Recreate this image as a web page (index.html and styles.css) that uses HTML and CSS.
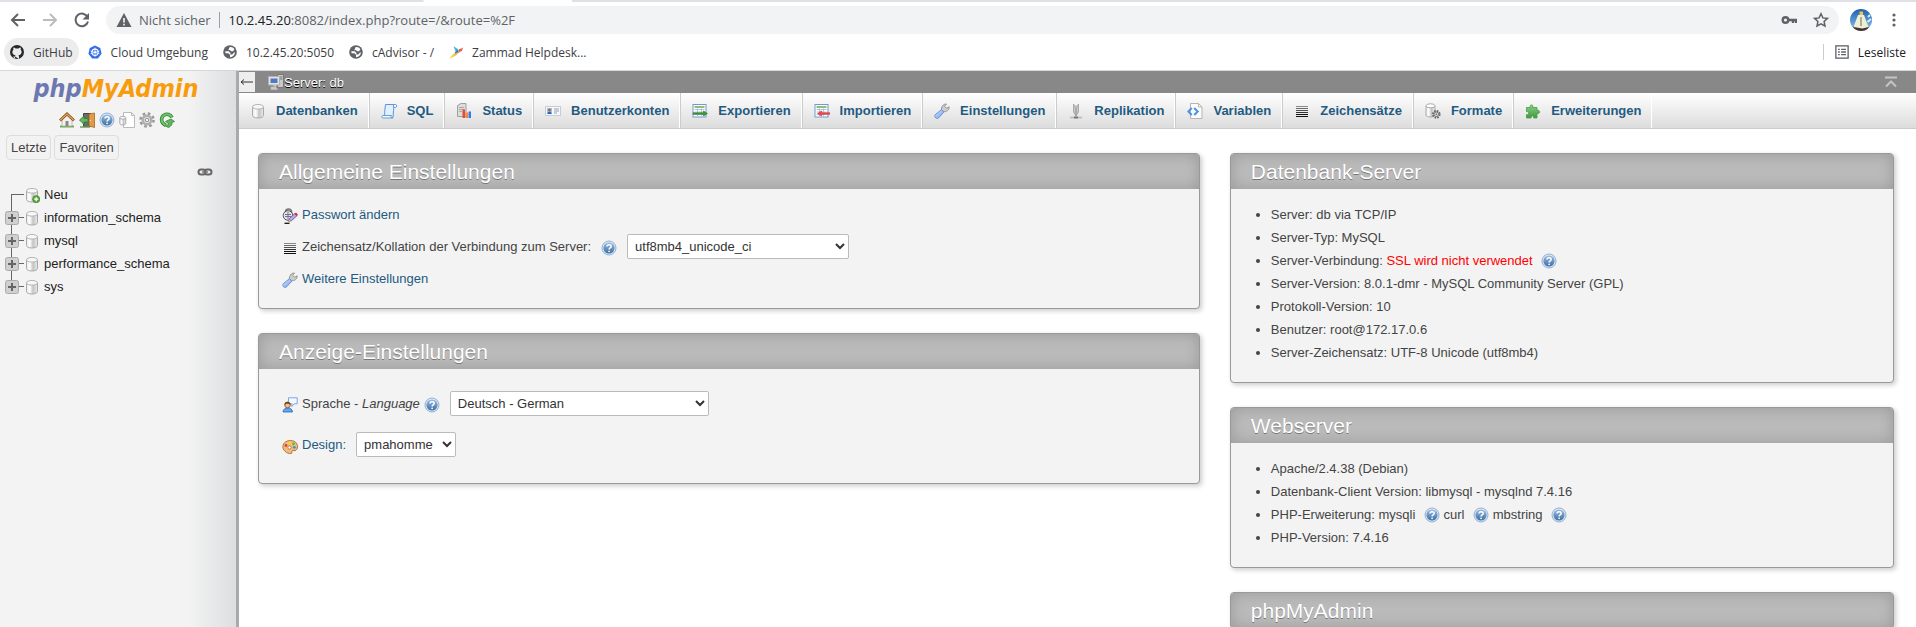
FILE: index.html
```html
<!DOCTYPE html>
<html lang="de">
<head>
<meta charset="utf-8">
<title>phpMyAdmin</title>
<link rel="stylesheet" href="styles.css">
</head>
<body>
<svg class="defs" aria-hidden="true">
  <defs>
    <linearGradient id="g-cyl" x1="0" x2="1" y1="0" y2="0"><stop offset="0" stop-color="#e8e8e8"/><stop offset=".3" stop-color="#fff"/><stop offset=".6" stop-color="#c4c4c4"/><stop offset="1" stop-color="#ececec"/></linearGradient>
    <linearGradient id="g-help" x1="0" x2="0" y1="0" y2="1"><stop offset="0" stop-color="#9dbde2"/><stop offset="1" stop-color="#3a6ea5"/></linearGradient>
    <linearGradient id="g-blue" x1="0" x2="1" y1="0" y2="1"><stop offset="0" stop-color="#d3e6ff"/><stop offset="1" stop-color="#6f9ee8"/></linearGradient>
    <linearGradient id="g-green" x1="0" x2="0" y1="0" y2="1"><stop offset="0" stop-color="#8bd08a"/><stop offset="1" stop-color="#3f9a3e"/></linearGradient>
    <linearGradient id="g-sky" x1="0" x2="0" y1="0" y2="1"><stop offset="0" stop-color="#1c5fb4"/><stop offset="1" stop-color="#8ec4ee"/></linearGradient>
  </defs>
  <symbol id="db" viewBox="0 0 16 16"><path d="M2.500 4v8.500c0 1.400 2.400 2.500 5.500 2.500s5.500-1.100 5.500-2.500V4" fill="url(#g-cyl)" stroke="#aaa"/><ellipse cx="8" cy="3.800" rx="5.500" ry="2.300" fill="#f8f8f8" stroke="#b5b5b5"/></symbol>
  <symbol id="dbnew" viewBox="0 0 16 16"><use href="#db"/><circle cx="12.200" cy="12.200" r="3.500" fill="#5cae3c" stroke="#3b7d22" stroke-width=".8"/><path d="M12.200 10.200v4M10.200 12.200h4" stroke="#fff" stroke-width="1.300"/></symbol>
  <symbol id="help" viewBox="0 0 16 16"><circle cx="8" cy="8" r="7" fill="#dce8f6" stroke="#7f9fc8" stroke-width=".8"/><circle cx="8" cy="8" r="5.600" fill="url(#g-help)"/><path d="M6 6.600c0-2.600 4.200-2.400 4.200-.2 0 1.500-2.100 1.500-2.100 3" fill="none" stroke="#fff" stroke-width="1.500"/><circle cx="8.100" cy="11.300" r=".9" fill="#fff"/></symbol>
  <symbol id="home" viewBox="0 0 16 16"><path d="M1 14.500h14" stroke="#7aa653" stroke-width="2"/><path d="M3 7.500 8 3l5 4.500V14H3z" fill="#f1f1f1" stroke="#a9a9a9" stroke-width=".7"/><path d="M1 8.500 8 2l7 6.500" fill="none" stroke="#8a4f16" stroke-width="2.800"/><path d="M1.200 8.200 8 2l6.800 6.200" fill="none" stroke="#e2a75c" stroke-width="1.200"/><path d="M6.500 9h3v5h-3z" fill="#888"/></symbol>
  <symbol id="exit" viewBox="0 0 16 16"><path d="M4.500 1.500h7v13h-7z" fill="#6b6b6b" stroke="#444"/><path d="m10 2 5.500-1v14.500L10 14z" fill="#e29a45" stroke="#9c5a1b" stroke-width=".7"/><circle cx="11.300" cy="8.500" r=".7" fill="#ffe39a"/><path d="M.5 8 5 4v2.500h4v3.500H5v2.500z" fill="#63b95f" stroke="#2f7f2c" stroke-width=".8"/><path d="M1 15h10" stroke="#6ba35b" stroke-width="1.500"/></symbol>
  <symbol id="docs" viewBox="0 0 16 16"><path d="M4.500.5h8l3 3v12h-11z" fill="#fff" stroke="#bbb"/><path d="M12.500.5v3h3" fill="none" stroke="#bbb"/><path d="M.8 6v5.500c0 .8 1.300 1.500 3 1.500s3-.7 3-1.500V6z" fill="url(#g-cyl)" stroke="#aaa"/><ellipse cx="3.800" cy="5.800" rx="3" ry="1.400" fill="#fff" stroke="#aaa"/></symbol>
  <symbol id="gear" viewBox="0 0 16 16"><circle cx="8" cy="8" r="6.500" fill="none" stroke="#999" stroke-width="2.600" stroke-dasharray="2.600 2.500"/><circle cx="8" cy="8" r="4.200" fill="#ededed" stroke="#b0b0b0" stroke-width="2.600"/><circle cx="8" cy="8" r="1.800" fill="#f5f5f5" stroke="#8f8f8f"/></symbol>
  <symbol id="reload" viewBox="0 0 16 16"><path d="M13 5.500C11.500 2.500 8 1.500 5.200 3 2 4.800 1.800 9.500 4.500 11.800L7 13.500" fill="none" stroke="#2e8530" stroke-width="3.600"/><path d="M13 5.500C11.500 2.500 8 1.500 5.200 3 2 4.800 1.800 9.500 4.500 11.800L7 13.500" fill="none" stroke="#72bf6c" stroke-width="2"/><path d="M6.500 9.500 12 7l3.500 2.500-2.500.8c.5 2-1 4-3.500 5.200l-3-1.500c2 0 3-1.500 2.800-3z" fill="#62b65e" stroke="#2e8530" stroke-width=".8"/></symbol>
  <symbol id="chain" viewBox="0 0 16 16"><rect x="1.500" y="5.500" width="7" height="5" rx="2.500" fill="none" stroke="#666" stroke-width="2"/><rect x="7.500" y="5.500" width="7" height="5" rx="2.500" fill="none" stroke="#666" stroke-width="2"/><path d="M5 8h6" stroke="#777" stroke-width="1.400"/></symbol>
  <symbol id="plus" viewBox="0 0 16 16"><rect x="1.500" y="1.500" width="13" height="13" rx="2" fill="#d0d0d0" stroke="#aaa"/><path d="M8 4v8M4 8h8" stroke="#666" stroke-width="2"/></symbol>
  <symbol id="server" viewBox="0 0 16 16"><path d="M9.500.5h6v13h-6z" fill="#c9c9c9" stroke="#777"/><path d="M11 3h3.500M11 5h3.500" stroke="#777"/><rect x=".5" y="2.500" width="11" height="8.500" fill="#e4e4e4" stroke="#b0b0b0"/><path d="M2.500 4.500h7V9h-7z" fill="#4d78c4"/><path d="M5 11h2.500v2.500H3.500V15h6" fill="none" stroke="#c9c9c9" stroke-width="1.400"/></symbol>
  <symbol id="sql" viewBox="0 0 16 16"><path d="M4.500 1.500h9.500c-1.500 1-1 3-1.500 6l-.5 7H2.500c1.500-1 1-4 1.300-7z" fill="#e2efff" stroke="#5c93d6"/><path d="M12.500 1.500h2c1.500 0 1.500 3 0 3h-2zM1.500 12.500h9c-1.500 1 0 2.500 1 2.500h-9.500c-1.500 0-1.500-2-.5-2.500z" fill="#f0f7ff" stroke="#5c93d6" stroke-width=".9"/></symbol>
  <symbol id="status" viewBox="0 0 16 16"><path d="M1.500 2.500 5 .5h5v13H1.500z" fill="#dcdcdc" stroke="#a0a0a0"/><path d="M3 4.500h5M3 6.500h5M3 8.500h3" stroke="#aaa"/><path d="M6.500 6.500h2.500V15H6.500z" fill="#e34b3b"/><path d="M9.500 9.500H12V15H9.500z" fill="#f28a34"/><path d="M12.500 8.500H15V15h-2.500z" fill="#3c76e2"/></symbol>
  <symbol id="users" viewBox="0 0 16 16"><rect x=".5" y="3.500" width="15" height="9" fill="#f6f7fa" stroke="#c6ccd4"/><path d="M2 5h5v6H2z" fill="#9cc2f0"/><circle cx="4.500" cy="7" r="1.500" fill="#a8683a"/><path d="M2.500 11c0-3 4-3 4 0z" fill="#2a64b8"/><path d="M9 6h5M9 8h5M9 10h3" stroke="#93a0b0"/></symbol>
  <symbol id="table" viewBox="0 0 16 16"><rect x="1" y="1.500" width="13" height="12.500" fill="#fff" stroke="#7499c8"/><path d="M2.500 4h10" stroke="#69a959" stroke-width="1.500"/><path d="M2.500 6.500h10M2.500 9h10M2.500 11.500h10M5.500 5.500v8M9.500 5.500v8" stroke="#a9bedb" stroke-width=".9"/></symbol>
  <symbol id="export" viewBox="0 0 16 16"><use href="#table"/><path d="M1 9.700h10.500V8l4 2.500-4 2.500v-1.700H1z" fill="#3b9a36" stroke="#1f6f1c" stroke-width=".5"/></symbol>
  <symbol id="import" viewBox="0 0 16 16"><use href="#table"/><path d="M15.800 9.700H7.500V8l-4 2.500 4 2.500v-1.700h8.300z" fill="#f24b4b" stroke="#c91e1e" stroke-width=".5"/></symbol>
  <symbol id="wrench" viewBox="0 0 16 16"><path d="M7.500 7.500C7 4 9 .8 12.500 1l-1.800 2.200 1.800 2 2.700-1.400c0 3.500-2.700 5.200-5.700 4.700z" fill="#ccc" stroke="#858585" stroke-width=".8"/><path d="m7.500 6.600 2.300 2.600-5 5.500c-2.400 2-5.400-.8-3.400-3.200z" fill="url(#g-blue)" stroke="#5c84cc" stroke-width=".8"/></symbol>
  <symbol id="repl" viewBox="0 0 16 16"><path d="M5.500 1v8L8 13V6zM10.500 1v8L8 13V6z" fill="#c8c8c8" stroke="#9d9d9d" stroke-width=".8"/><path d="M8 2v10" stroke="#aaa"/><path d="M2 14.500h12" stroke="#b8b8b8" stroke-width="1.600"/><path d="M6 14.500h4" stroke="#777" stroke-width="2"/></symbol>
  <symbol id="vars" viewBox="0 0 16 16"><path d="M3.500.5h8l3.500 3.500v11.500H3.500z" fill="#fcfcfc" stroke="#b5b5b5"/><path d="M11.500.5V4H15" fill="none" stroke="#b5b5b5"/><path d="M4.800 5 1.300 8.500 4.800 12M7.200 5l3.500 3.500L7.200 12" fill="none" stroke="#4992e4" stroke-width="2"/></symbol>
  <symbol id="lines" viewBox="0 0 16 16"><path d="M2 3.500h12" stroke="#8a8a8a"/><path d="M2 5.500h12" stroke="#6b6b6b"/><path d="M2 7.500h12" stroke="#505050"/><path d="M2 9.500h12" stroke="#333"/><path d="M2 11.500h12M2 13.500h12" stroke="#111"/></symbol>
  <symbol id="engine" viewBox="0 0 16 16"><path d="M1 3v9c0 1.300 2 2 4.500 2S10 13.300 10 12V3" fill="url(#g-cyl)" stroke="#aaa"/><ellipse cx="5.500" cy="2.800" rx="4.500" ry="2" fill="#fff" stroke="#aaa"/><circle cx="11.300" cy="11.300" r="3.300" fill="#ddd" stroke="#666" stroke-width="2" stroke-dasharray="1.600 1"/><circle cx="11.300" cy="11.300" r="2.300" fill="#ddd" stroke="#777"/><circle cx="11.300" cy="11.300" r=".8" fill="#555"/></symbol>
  <symbol id="plugin" viewBox="0 0 16 16"><path d="M1.500 4.500h4C4 1 9 1 7.800 4.500H12v3c3.500-1.200 3.500 4 0 3v4.500H8.500c1-2.800-3.200-2.800-2.200 0H1.500v-3.500c3 1 3-3.800 0-2.800z" fill="url(#g-green)" stroke="#4a9d49" stroke-width=".8"/></symbol>
  <symbol id="passwd" viewBox="0 0 16 16"><path d="M3.500 6V4c0-4 6-4 6 0v2" fill="none" stroke="#777" stroke-width="1.700"/><circle cx="6" cy="7.500" r="4.800" fill="#e4e2ea" stroke="#444" stroke-width=".9"/><path d="M3 6.500h6M3 8.500h6M6 4v7" stroke="#77738a"/><path d="m6.500 13.500 1-3 5.500-5 2 2.200-5.500 5z" fill="#b9adf0" stroke="#453a86" stroke-width=".7"/><path d="m12.500 6 1.500-1.500 2 2.200L14.500 8z" fill="#e52a20"/><path d="M2.500 15.300h5" stroke="#111" stroke-width="1.300"/><path d="m6 14 1-2.500 1.500 1.500z" fill="#e9bd3c"/></symbol>
  <symbol id="lang" viewBox="0 0 16 16"><path d="M6.500.8h8.700v6h-3L9.800 9.500 10 6.800H6.500z" fill="#f5f9ff" stroke="#6d9cd9" stroke-width=".9"/><path d="M1 15c0-5.500 9.500-5.500 9.500 0z" fill="#5fa3f2" stroke="#2a65b4" stroke-width=".8"/><circle cx="5.500" cy="8" r="2.800" fill="#f0c093" stroke="#6d3f19" stroke-width=".7"/><path d="M2.500 8C2 3.500 9 3.500 8.500 8 7 6.500 5 6 2.500 8z" fill="#7a431a"/></symbol>
  <symbol id="palette" viewBox="0 0 16 16"><path d="M1 7.500C2 3 8 1.500 12 3.200c4 1.800 4.500 7 2 9-1.500 1.300-2.500-.7-4 .8-1 1.300 1 2-1 2.500C5 16 0 12 1 7.500z" fill="#f0bd80" stroke="#ab6b2d" stroke-width=".9"/><circle cx="4" cy="7.500" r="1.400" fill="#e73c36"/><circle cx="7.500" cy="5" r="1.400" fill="#f5d432"/><circle cx="11.500" cy="5.800" r="1.400" fill="#58b947"/><circle cx="12.300" cy="9.300" r="1.400" fill="#2d9bc6"/><circle cx="7.500" cy="9.500" r="1.600" fill="#fff" stroke="#ab6b2d" stroke-width=".8"/></symbol>
  <symbol id="globe" viewBox="0 0 16 16"><circle cx="8" cy="8" r="7.800" fill="#5f6368"/><path d="M7.500 2.500c2-.5 4.500.5 5.500 2.500l-1.500 2H9L8 5.800 6 6zM2.500 7.200h4l2 2v2l2.500-.5 1.500-2h1.200c-.2 3-2.700 5.300-5.700 5.200v-2.700l-2-1.700H3z" fill="#fff"/></symbol>
</svg>

<header class="browser">
  <div class="strip"><span class="strip-left"></span><span class="strip-right"></span></div>
  <div class="toolbar">
    <button class="chrome-btn" aria-label="Zurück"><svg viewBox="0 0 16 16"><path d="M15 8H2M8 2 2 8l6 6" fill="none" stroke="#5f6368" stroke-width="2"/></svg></button>
    <button class="chrome-btn" aria-label="Vorwärts"><svg viewBox="0 0 16 16"><path d="M1 8h13M8 2l6 6-6 6" fill="none" stroke="#babcbe" stroke-width="2"/></svg></button>
    <button class="chrome-btn" aria-label="Neu laden"><svg viewBox="0 0 16 16"><path d="M13.500 5A6.300 6.300 0 1 0 14 9.500" fill="none" stroke="#5f6368" stroke-width="2"/><path d="M15 1v6.500H8.500z" fill="#5f6368"/></svg></button>
    <div class="omnibox">
      <svg class="warn" viewBox="0 0 16 16"><path d="M8 1 15.500 15H.5z" fill="#5f6368"/><path d="M8 6v4.500M8 11.800v1.600" stroke="#fff" stroke-width="1.500"/></svg>
      <span class="insecure">Nicht sicher</span>
      <span class="url"><b>10.2.45.20</b>:8082/index.php?route=/&amp;route=%2F</span>
      <svg class="ic" viewBox="0 0 16 16"><circle cx="4.500" cy="8" r="2.800" fill="none" stroke="#5f6368" stroke-width="2.400"/><path d="M7.500 8H15v3M12 8v3" fill="none" stroke="#5f6368" stroke-width="2.400"/></svg>
      <svg class="ic star" viewBox="0 0 16 16"><path d="m8 1.800 1.900 4.100 4.500.5-3.300 3.100.9 4.500L8 11.800 4 14l.9-4.500L1.600 6.400l4.500-.5z" fill="none" stroke="#5f6368" stroke-width="1.500"/></svg>
    </div>
    <svg class="avatar" viewBox="0 0 22 22"><circle cx="11" cy="11" r="11" fill="url(#g-sky)"/><path d="M2.500 17.500C5 21 8 22 11 22s6-1 8-4z" fill="#4b3034"/><path d="M8 6h6l4.500 12-6 1.500L3.500 18z" fill="#eef0d4"/><path d="M9.500 2.500h3.500V6H9.500z" fill="#f2c33c"/><path d="M11 8v9" stroke="#706a50"/><path d="m18 8 2-2M17.500 13l3.500-3" stroke="#dcecf8" stroke-width="2"/></svg>
    <button class="chrome-btn menu" aria-label="Menü"><svg viewBox="0 0 16 16"><circle cx="8" cy="3" r="1.600" fill="#5f6368"/><circle cx="8" cy="8" r="1.600" fill="#5f6368"/><circle cx="8" cy="13" r="1.600" fill="#5f6368"/></svg></button>
  </div>
  <nav class="bookmarks">
    <a href="#" class="bm active"><svg viewBox="0 0 16 16"><circle cx="8" cy="8" r="8" fill="#24292e"/><path d="M5.800 16v-2.800c-2.600.6-3-1-3.600-1.600M5.800 13.200c0-.9.200-1.300.6-1.600-4-.5-4.600-4.400-2.500-6.300-.3-.8-.2-1.600.1-2.400 1 0 1.800.6 2.400 1h3.300c.6-.4 1.400-1 2.400-1 .3.800.4 1.600.1 2.400 2 2 1.300 5.800-2.500 6.300.4.400.6 1 .6 1.800V16z" fill="#ececec"/></svg>GitHub</a>
    <a href="#" class="bm"><svg viewBox="0 0 16 16"><path d="m8 .5 6 3 1.500 6.500-4.200 5.500H4.700L.5 10 2 3.500z" fill="#326de6"/><circle cx="8" cy="8.300" r="3.600" fill="none" stroke="#fff" stroke-width="1.200"/><path d="M8 3v10.500M3 7l10 3M13 7 3 10" stroke="#fff" stroke-width=".9"/><circle cx="8" cy="8.300" r="1.200" fill="#fff"/></svg>Cloud Umgebung</a>
    <a href="#" class="bm"><svg><use href="#globe"/></svg>10.2.45.20:5050</a>
    <a href="#" class="bm"><svg><use href="#globe"/></svg>cAdvisor - /</a>
    <a href="#" class="bm"><svg viewBox="0 0 16 16"><path d="m5 1 5 3.500-2 4z" fill="#45b5e0"/><path d="m10 4.500 1.500 4L6 9.500z" fill="#2a82c4"/><path d="m11.500 8.500 3.500-5-4 1.500z" fill="#e0543a"/><path d="m15 3.500 1-1-1 4-3.500 2z" fill="#e9573a"/><path d="M6 9.500 11.500 8.500 6 13z" fill="#f2a33a"/><path d="M6 9.500V13L.5 15.500 3 12z" fill="#f7d23e"/></svg>Zammad Helpdesk...</a>
    <a href="#" class="bm reading"><svg viewBox="0 0 16 16"><rect x="1" y="1" width="14" height="14" fill="none" stroke="#5f6368" stroke-width="1.500"/><path d="M3.500 5h2M7 5h5.500M3.500 8h2M7 8h5.500M3.500 11h2M7 11h5.500" stroke="#5f6368" stroke-width="1.500"/></svg>Leseliste</a>
  </nav>
</header>

<div class="app">
  <aside class="sidebar">
    <a href="#" class="logo"><span class="logo-php">php</span>MyAdmin</a>
    <div class="shortcuts">
      <a href="#" aria-label="Startseite"><svg class="ic"><use href="#home"/></svg></a>
      <a href="#" aria-label="Abmelden"><svg class="ic"><use href="#exit"/></svg></a>
      <a href="#" aria-label="Hilfe"><svg class="ic"><use href="#help"/></svg></a>
      <a href="#" aria-label="Dokumentation"><svg class="ic"><use href="#docs"/></svg></a>
      <a href="#" aria-label="Einstellungen"><svg class="ic"><use href="#gear"/></svg></a>
      <a href="#" aria-label="Neu laden"><svg class="ic"><use href="#reload"/></svg></a>
    </div>
    <div class="quick"><button>Letzte</button><button>Favoriten</button></div>
    <div class="linkrow"><svg class="ic"><use href="#chain"/></svg></div>
    <ul class="tree">
      <li><span class="node first"></span><a href="#"><svg class="ic"><use href="#dbnew"/></svg>Neu</a></li>
      <li><span class="node"><svg class="ic"><use href="#plus"/></svg></span><a href="#"><svg class="ic"><use href="#db"/></svg>information_schema</a></li>
      <li><span class="node"><svg class="ic"><use href="#plus"/></svg></span><a href="#"><svg class="ic"><use href="#db"/></svg>mysql</a></li>
      <li><span class="node"><svg class="ic"><use href="#plus"/></svg></span><a href="#"><svg class="ic"><use href="#db"/></svg>performance_schema</a></li>
      <li><span class="node last"><svg class="ic"><use href="#plus"/></svg></span><a href="#"><svg class="ic"><use href="#db"/></svg>sys</a></li>
    </ul>
  </aside>
  <div class="resizer"></div>
  <main class="main">
    <div class="serverbar">
      <button class="collapse" aria-label="Navigation einklappen"><svg viewBox="0 0 16 16"><path d="M14 8H2M5 5.500 2 8l3 2.500" fill="none" stroke="#333"/></svg></button>
      <a href="#" class="serverlink"><svg class="ic"><use href="#server"/></svg>Server: db</a>
      <svg class="totop" viewBox="0 0 12 12"><path d="M0 1.500h12" stroke="#c4c4c4" stroke-width="2"/><path d="m1 10.500 5-5 5 5" fill="none" stroke="#c4c4c4" stroke-width="2"/></svg>
    </div>
    <nav class="tabs">
      <a href="#"><svg class="ic"><use href="#db"/></svg>Datenbanken</a>
      <a href="#"><svg class="ic"><use href="#sql"/></svg>SQL</a>
      <a href="#"><svg class="ic"><use href="#status"/></svg>Status</a>
      <a href="#"><svg class="ic"><use href="#users"/></svg>Benutzerkonten</a>
      <a href="#"><svg class="ic"><use href="#export"/></svg>Exportieren</a>
      <a href="#"><svg class="ic"><use href="#import"/></svg>Importieren</a>
      <a href="#"><svg class="ic"><use href="#wrench"/></svg>Einstellungen</a>
      <a href="#"><svg class="ic"><use href="#repl"/></svg>Replikation</a>
      <a href="#"><svg class="ic"><use href="#vars"/></svg>Variablen</a>
      <a href="#"><svg class="ic"><use href="#lines"/></svg>Zeichensätze</a>
      <a href="#"><svg class="ic"><use href="#engine"/></svg>Formate</a>
      <a href="#"><svg class="ic"><use href="#plugin"/></svg>Erweiterungen</a>
    </nav>
    <div class="columns">
      <div class="col">
        <section class="card">
          <h2>Allgemeine Einstellungen</h2>
          <div class="body rows">
            <div class="row"><svg class="ic"><use href="#passwd"/></svg><a href="#">Passwort ändern</a></div>
            <div class="row"><svg class="ic"><use href="#lines"/></svg><label for="collation">Zeichensatz/Kollation der Verbindung zum Server:</label><svg class="ic help wide"><use href="#help"/></svg><select id="collation" class="sel sel-collation"><option>utf8mb4_unicode_ci</option></select></div>
            <div class="row"><svg class="ic"><use href="#wrench"/></svg><a href="#">Weitere Einstellungen</a></div>
          </div>
        </section>
        <section class="card">
          <h2>Anzeige-Einstellungen</h2>
          <div class="body">
            <div class="row spaced"><svg class="ic"><use href="#lang"/></svg><label for="lang-select">Sprache - <i>Language</i></label><svg class="ic help"><use href="#help"/></svg><select id="lang-select" class="sel sel-lang"><option>Deutsch - German</option></select></div>
            <div class="row spaced"><svg class="ic"><use href="#palette"/></svg><label class="blue" for="theme">Design:</label><select id="theme" class="sel sel-theme"><option>pmahomme</option></select></div>
          </div>
        </section>
      </div>
      <div class="col">
        <section class="card">
          <h2>Datenbank-Server</h2>
          <ul class="body list">
            <li>Server: db via TCP/IP</li>
            <li>Server-Typ: MySQL</li>
            <li>Server-Verbindung: <span class="alert">SSL wird nicht verwendet</span> <svg class="ic q"><use href="#help"/></svg></li>
            <li>Server-Version: 8.0.1-dmr - MySQL Community Server (GPL)</li>
            <li>Protokoll-Version: 10</li>
            <li>Benutzer: root@172.17.0.6</li>
            <li>Server-Zeichensatz: UTF-8 Unicode (utf8mb4)</li>
          </ul>
        </section>
        <section class="card">
          <h2>Webserver</h2>
          <ul class="body list">
            <li>Apache/2.4.38 (Debian)</li>
            <li>Datenbank-Client Version: libmysql - mysqlnd 7.4.16</li>
            <li>PHP-Erweiterung: mysqli <svg class="ic q"><use href="#help"/></svg> curl <svg class="ic q"><use href="#help"/></svg> mbstring <svg class="ic q"><use href="#help"/></svg></li>
            <li>PHP-Version: 7.4.16</li>
          </ul>
        </section>
        <section class="card">
          <h2>phpMyAdmin</h2>
        </section>
      </div>
    </div>
  </main>
</div>
</body>
</html>
```

FILE: styles.css
```css
* { box-sizing: border-box; }
html, body { height: 100%; }
body {
  margin: 0;
  display: flex;
  flex-direction: column;
  background: #fff;
  color: #444;
  font: 13px/23px "Liberation Sans", Arial, sans-serif;
}
a { color: #235a81; text-decoration: none; }
button { font: inherit; padding: 0; border: 0; background: none; color: inherit; }
ul { list-style: none; margin: 0; padding: 0; }
.defs { position: absolute; width: 0; height: 0; }
.ic { width: 16px; height: 16px; flex: none; }

/* browser chrome */
.browser { flex: none; border-bottom: 1px solid #d5d7d9; font-family: "Open Sans", "Noto Sans", sans-serif; }
.strip { display: flex; height: 2px; }
.strip span { background: #dee1e6; }
.strip-left { width: 424px; margin-right: 148px; border-top-right-radius: 2px; }
.strip-right { flex: 1; }
.toolbar { display: flex; align-items: center; height: 36px; padding: 0 14px 0 10px; }
.chrome-btn { width: 16px; height: 16px; margin-right: 16px; }
.chrome-btn svg { display: block; }
.omnibox {
  flex: 1;
  display: flex;
  align-items: center;
  height: 28px;
  margin-right: 11px;
  padding: 0 10px;
  border-radius: 14px;
  background: #f1f3f4;
  color: #5f6368;
  font-size: 13px;
  line-height: 16px;
}
.warn { width: 16px; height: 16px; margin-right: 7px; }
.insecure { padding-right: 8px; margin-right: 9px; border-right: 1px solid #9aa0a6; }
.url { flex: 1; }
.url b { font-weight: 400; color: #202124; }
.star { margin-left: 16px; }
.avatar { width: 22px; height: 22px; margin-right: 14px; }
.menu { margin: 0; }
.bookmarks { display: flex; gap: 3px; padding: 0 8px 4px 4px; }
.bm {
  display: flex;
  align-items: center;
  gap: 9px;
  height: 28px;
  padding: 0 6px;
  border-radius: 14px;
  color: #3c4043;
  font-size: 12px;
  white-space: nowrap;
}
.bm svg { width: 14px; height: 14px; flex: none; }
.bm.active { background: #ececec; }
.reading { margin: 6px 0 6px auto; height: 16px; border-left: 1px solid #ccc; border-radius: 0; padding: 0 2px 0 11px; color: #202124; }

/* navigation */
.app { flex: 1; display: flex; min-height: 0; overflow: hidden; }
.sidebar {
  width: 236px;
  flex: none;
  padding-top: 5px;
  background: linear-gradient(to right, #f3f3f3 80%, #dcdee0);
}
.logo {
  display: block;
  margin-right: 4px;
  text-align: center;
  color: #f89c0e;
  font: italic bold 25px/26px "DejaVu Sans Condensed", "DejaVu Sans", sans-serif;
}
.logo-php { color: #6c78af; }
.shortcuts { display: flex; justify-content: center; gap: 4px; margin: 10px 2px 7px 0; }
.shortcuts a, .shortcuts svg { display: block; }
.quick { display: flex; gap: 3px; padding-left: 6px; }
.quick button { height: 25px; padding: 0 4px; border: 1px solid #ddd; border-radius: 4px; background: #f2f2f2; }
.linkrow { display: flex; justify-content: flex-end; padding: 4px 23px 3px 0; }
.tree li, .tree a { display: flex; align-items: center; height: 23px; }
.tree a { gap: 4px; color: #222; }
.tree li { padding-left: 4px; }
.node {
  display: flex;
  align-items: center;
  width: 20px;
  height: 23px;
  background: linear-gradient(#666, #666) 7px 0 / 1px 100% no-repeat, linear-gradient(#666, #666) 7px 11px / 13px 1px no-repeat;
}
.node.first { background-size: 1px 12px, 13px 1px; background-position: 7px 11px, 7px 11px; }
.node.last { background-size: 1px 12px, 13px 1px; }
.resizer { width: 3px; flex: none; background: #aaa; }

/* main */
.main { flex: 1; min-width: 0; }
.serverbar { display: flex; align-items: center; height: 22px; padding-right: 19px; background: #888; }
.collapse { width: 16px; height: 20px; margin-right: 13px; background: #eee; }
.collapse svg { display: block; width: 16px; height: 16px; }
.serverlink { display: flex; align-items: center; flex: 1; color: #fff; text-shadow: 0 1px 0 #000; }
.totop { width: 12px; height: 12px; }
.tabs {
  display: flex;
  height: 36px;
  border-bottom: 1px solid #ccc;
  background: linear-gradient(#fff, #dcdcdc);
}
.tabs a {
  display: flex;
  align-items: center;
  gap: 10px;
  padding: 0 10px 0 11px;
  border-right: 1px solid #fff;
  box-shadow: 1px 0 0 #ccc;
  margin-right: 1px;
  font-weight: bold;
  white-space: nowrap;
}
.tabs a:last-child { box-shadow: none; }
.columns { display: grid; grid-template-columns: 7fr 5fr; padding: 24px 7px 0 4px; }
.col { display: flex; flex-direction: column; gap: 24px; padding: 0 15px; }
.card {
  border: 1px solid #999;
  border-radius: 4px;
  background: #f3f3f3;
  box-shadow: 2px 2px 5px #ccc;
}
.card h2 {
  margin: 0;
  padding: 0 20px;
  border-radius: 3px 3px 0 0;
  background: #bbb;
  box-shadow: inset 0 0 15px #999;
  color: #fff;
  font-size: 21px;
  font-weight: 400;
  line-height: 35px;
  text-shadow: 0 1px 0 #777;
}
.body { padding: 14px 23px 18px; }
.rows { display: flex; flex-direction: column; gap: 8px; }
.row { display: flex; align-items: center; gap: 4px; }
.spaced { padding: 8px 0; }
.row .ic { margin-top: 3px; }
.blue { color: #235a81; }
.sel {
  height: 25px;
  margin-left: 6px;
  padding: 0 3px;
  border: 1px solid #bbb;
  border-radius: 2px;
  background: #fff;
  color: #333;
  font: 13px "Liberation Sans", Arial, sans-serif;
}
.wide { margin-left: 6px; }
.sel-collation { width: 222px; }
.sel-lang { width: 259px; }
.sel-theme { width: 100px; }
.list { padding-left: 40px; list-style: disc; }
.alert { color: #f00; }
.q { margin-left: 5px; vertical-align: -4px; }
```
